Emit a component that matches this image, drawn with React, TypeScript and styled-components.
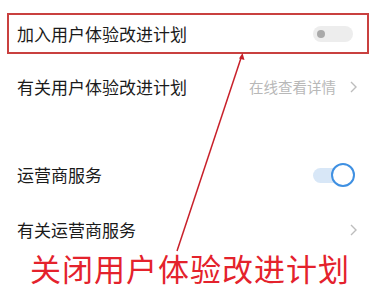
import React from "react";
import styled, { createGlobalStyle } from "styled-components";

const Global = createGlobalStyle`
  html, body { margin: 0; padding: 0; background: #ffffff; }
  body { font-family: "Noto Sans CJK SC", "Noto Sans", sans-serif; }
`;

const Page = styled.div`
  position: relative;
  width: 380px;
  height: 285px;
  overflow: hidden;
  background: #ffffff;
`;

const List = styled.div`
  display: flex;
  flex-direction: column;
  padding: 13px 11px 0 7px;
`;

const Row = styled.div<{ $h: number; $pr?: number }>`
  display: flex;
  align-items: center;
  height: ${(p) => p.$h}px;
  padding: 0 ${(p) => p.$pr ?? 12}px 0 10px;
  box-sizing: border-box;
`;

const HighlightRow = styled(Row)`
  border: 2px solid #c9403f;
  padding-left: 8px;
`;

const Label = styled.span`
  flex: 1;
  font-size: 17px;
  line-height: 20px;
  color: #1a1a1a;
  white-space: nowrap;
`;

const Detail = styled.span`
  font-size: 14.5px;
  line-height: 18px;
  color: #b8b8b8;
  margin-right: 14px;
  white-space: nowrap;
`;

const SectionGap = styled.div`
  height: 27px;
`;

const OffTrack = styled.div`
  width: 40px;
  height: 16px;
  border-radius: 8px;
  background: #ededed;
  display: flex;
  align-items: center;
  padding-left: 4px;
  box-sizing: border-box;
`;

const OffDot = styled.div`
  width: 8px;
  height: 8px;
  border-radius: 50%;
  background: #a9a9a9;
`;

const OnSwitch = styled.div`
  display: flex;
  align-items: center;
  width: 42px;
  height: 24px;
`;

const OnTrack = styled.div`
  width: 30px;
  height: 15px;
  border-radius: 7.5px 0 0 7.5px;
  background: #d8e7f7;
  margin-right: -12px;
`;

const OnThumb = styled.div`
  width: 24px;
  height: 24px;
  border-radius: 50%;
  box-sizing: border-box;
  border: 2.5px solid #3f90e2;
  background: #ffffff;
`;

const Arrow = styled.svg`
  position: absolute;
  left: 0;
  top: 0;
  pointer-events: none;
`;

const Caption = styled.div`
  position: absolute;
  left: 30px;
  top: 252px;
  font-size: 31px;
  line-height: 31px;
  letter-spacing: 1px;
  color: #e4222c;
  white-space: nowrap;
`;

const Chevron = () => (
  <svg width="7" height="12" viewBox="0 0 7 12">
    <polyline points="1,1 6,6 1,11" fill="none" stroke="#bdbdbd" strokeWidth="1.4" />
  </svg>
);

export default function App() {
  return (
    <Page>
      <Global />
      <List>
        <HighlightRow $h={41} $pr={14}>
          <Label>加入用户体验改进计划</Label>
          <OffTrack>
            <OffDot />
          </OffTrack>
        </HighlightRow>
        <Row $h={66} $pr={12}>
          <Label>有关用户体验改进计划</Label>
          <Detail>在线查看详情</Detail>
          <Chevron />
        </Row>
        <SectionGap />
        <Row $h={56} $pr={14}>
          <Label>运营商服务</Label>
          <OnSwitch>
            <OnTrack />
            <OnThumb />
          </OnSwitch>
        </Row>
        <Row $h={54} $pr={12}>
          <Label>有关运营商服务</Label>
          <Chevron />
        </Row>
      </List>
      <Arrow width="380" height="285" viewBox="0 0 380 285">
        <line x1="241" y1="58" x2="177" y2="251" stroke="#c8202a" strokeWidth="1.5" />
        <polygon points="242.5,53 244.5,60 239,58.5" fill="#c8202a" />
      </Arrow>
      <Caption>关闭用户体验改进计划</Caption>
    </Page>
  );
}
